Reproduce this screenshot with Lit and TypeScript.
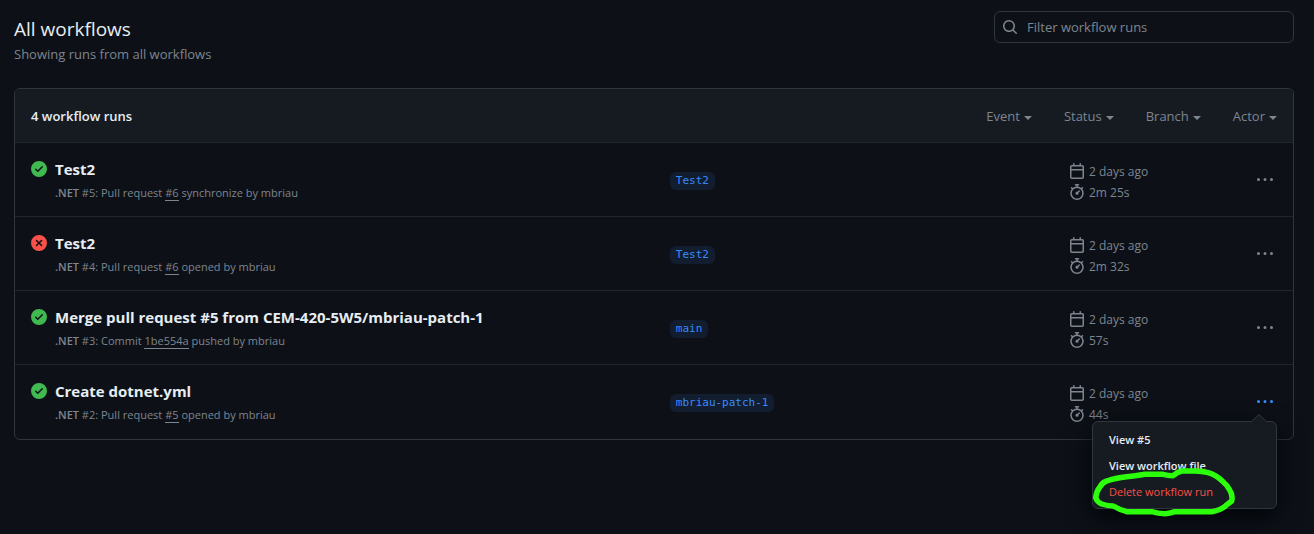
import { LitElement, html, svg, css } from "lit";
import { customElement, state } from "lit/decorators.js";

type Run = {
  ok: boolean;
  title: string;
  num: number;
  before: string;
  ref: string;
  after: string;
  branch: string;
  duration: string;
};

const RUNS: Run[] = [
  { ok: true, title: "Test2", num: 5, before: "Pull request", ref: "#6", after: "synchronize by", branch: "Test2", duration: "2m 25s" },
  { ok: false, title: "Test2", num: 4, before: "Pull request", ref: "#6", after: "opened by", branch: "Test2", duration: "2m 32s" },
  { ok: true, title: "Merge pull request #5 from CEM-420-5W5/mbriau-patch-1", num: 3, before: "Commit", ref: "1be554a", after: "pushed by", branch: "main", duration: "57s" },
  { ok: true, title: "Create dotnet.yml", num: 2, before: "Pull request", ref: "#5", after: "opened by", branch: "mbriau-patch-1", duration: "44s" },
];

const ICONS = {
  search: svg`<path fill-rule="evenodd" d="M11.5 7a4.499 4.499 0 11-8.998 0A4.499 4.499 0 0111.5 7zm-.82 4.74a6 6 0 111.06-1.06l3.04 3.04a.75.75 0 11-1.06 1.06l-3.04-3.04z"/>`,
  check: svg`<path fill-rule="evenodd" d="M8 16A8 8 0 108 0a8 8 0 000 16zm3.78-9.72a.75.75 0 00-1.06-1.06L6.75 9.19 5.28 7.72a.75.75 0 00-1.06 1.06l2 2a.75.75 0 001.06 0l4.5-4.5z"/>`,
  cross: svg`<path fill-rule="evenodd" d="M2.343 13.657A8 8 0 1113.657 2.343 8 8 0 012.343 13.657zM6.03 4.97a.75.75 0 00-1.06 1.06L6.94 8 4.97 9.97a.75.75 0 101.06 1.06L8 9.06l1.97 1.97a.75.75 0 101.06-1.06L9.06 8l1.97-1.97a.75.75 0 10-1.06-1.06L8 6.94 6.03 4.97z"/>`,
  calendar: svg`<path fill-rule="evenodd" d="M4.75 0a.75.75 0 01.75.75V2h5V.75a.75.75 0 011.5 0V2h1.25c.966 0 1.75.784 1.75 1.75v10.5A1.75 1.75 0 0113.25 16H2.75A1.75 1.75 0 011 14.25V3.75C1 2.784 1.784 2 2.75 2H4V.75A.75.75 0 014.75 0zm0 3.5h8.5a.25.25 0 01.25.25V6h-11V3.75a.25.25 0 01.25-.25h2zm-2.25 4v6.75c0 .138.112.25.25.25h10.5a.25.25 0 00.25-.25V7.5h-11z"/>`,
  stopwatch: svg`<path fill-rule="evenodd" d="M5.75.75A.75.75 0 016.5 0h3a.75.75 0 010 1.5h-.75v1l-.001.041a6.718 6.718 0 013.464 1.435l.007-.006.75-.75a.75.75 0 111.06 1.06l-.75.75-.006.007a6.75 6.75 0 11-10.548 0L2.72 5.03l-.75-.75a.75.75 0 011.06-1.06l.75.75.007.006A6.718 6.718 0 017.25 2.541a.756.756 0 010-.041v-1H6.5a.75.75 0 01-.75-.75zM8 14.5A5.25 5.25 0 108 4a5.25 5.25 0 000 10.5zm.389-6.7l1.33-1.33a.75.75 0 111.061 1.06L9.45 8.861A1.502 1.502 0 018 10.75a1.5 1.5 0 11.389-2.95z"/>`,
  kebab: svg`<path d="M8 9a1.5 1.5 0 100-3 1.5 1.5 0 000 3zM1.5 9a1.5 1.5 0 100-3 1.5 1.5 0 000 3zm13 0a1.5 1.5 0 100-3 1.5 1.5 0 000 3z"/>`,
};

const icon = (name: keyof typeof ICONS, cls = "") =>
  html`<svg class="icon ${cls}" viewBox="0 0 16 16" width="16" height="16" aria-hidden="true">${ICONS[name]}</svg>`;

@customElement("app-root")
export class AppRoot extends LitElement {
  @state() private openRun: number | null = 2;

  static styles = css`
    :host {
      display: block;
      box-sizing: border-box;
      min-height: 100vh;
      padding: 11px 20px 24px 14px;
      background: #0d1117;
      color: #e6edf3;
      font-family: "Segoe UI", "Open Sans", "Noto Sans", sans-serif;
      font-size: 13px;
      line-height: 20px;
    }
    * { box-sizing: border-box; }
    h1, h2, h3, p, ul { margin: 0; padding: 0; }
    ul { list-style: none; }
    button, input { font: inherit; color: inherit; background: none; border: 0; padding: 0; }
    button { cursor: pointer; }
    a { color: inherit; text-decoration: none; }
    .icon { display: block; flex: none; fill: currentColor; }
    .top { display: flex; justify-content: space-between; align-items: flex-start; margin-bottom: 27px; }
    h1 { font-size: 19px; font-weight: 400; line-height: 36px; }
    .sub { color: #7d8590; line-height: 14px; }
    .search {
      display: flex; align-items: center; gap: 9px;
      width: 300px; height: 32px; padding: 0 7px;
      border: 1px solid #30363d; border-radius: 6px; color: #7d8590;
    }
    .search input { flex: 1; min-width: 0; outline: none; }
    .search input::placeholder { color: #7d8590; opacity: 1; }
    .panel { border: 1px solid #30363d; border-radius: 6px; }
    .head {
      display: flex; align-items: center; justify-content: space-between;
      padding: 17px 16px 16px; background: #161b22; border-radius: 5px 5px 0 0;
    }
    .head h2 { font-size: 13px; font-weight: 600; line-height: 20px; }
    .filters { display: flex; gap: 32px; color: #7d8590; }
    .filters button { display: flex; align-items: center; gap: 4px; }
    .filters button::after {
      content: ""; border: 4px solid transparent; border-top-color: currentColor; border-bottom: 0; margin-top: 3px;
    }
    .runs { padding-bottom: 1px; }
    .run {
      display: grid; grid-template-columns: 8fr 5fr 208px; align-items: center;
      padding: 15px 16px 13px; border-top: 1px solid #21262d;
    }
    .main { display: flex; gap: 8px; align-self: start; }
    .status { padding-top: 3px; color: #3fb950; }
    .status.failed { color: #f85149; }
    h3 { font-size: 15px; font-weight: 700; line-height: 22px; }
    .meta { margin-top: 2px; font-size: 11px; line-height: 21px; color: #7d8590; }
    .meta b { font-weight: 600; }
    .meta .ref { border-bottom: 1px solid #7d8590; }
    .where { display: flex; }
    .branch {
      padding: 0 6px; border-radius: 6px; line-height: 18px;
      font-family: Consolas, "DejaVu Sans Mono", monospace; font-size: 11px;
      color: #388bfd; background: #121d2f;
    }
    .end { display: flex; justify-content: space-between; align-items: center; position: relative; }
    .times { padding-top: 3px; color: #7d8590; font-size: 12px; line-height: 21px; }
    .times li { display: flex; align-items: flex-start; gap: 4px; }
    .times .icon { margin-top: 2px; }
    .more { padding: 3px 4px 5px; color: #7d8590; }
    .more.open { color: #388bfd; }
    .menu {
      position: absolute; top: 41px; right: 0; z-index: 2;
      width: 185px; padding: 5px 0 3px;
      background: #161b22; border: 1px solid #30363d; border-radius: 6px;
      box-shadow: 0 8px 24px #010409; font-size: 11px; line-height: 26px;
    }
    .caret { position: absolute; top: -8px; right: 9px; display: block; }
    .menu li > * { display: block; width: 100%; padding: 0 16px; text-align: left; line-height: 26px; font-weight: 600; }
    .menu .danger { color: #f85149; font-weight: 400; }
    .mark { position: absolute; left: 0; top: 46px; pointer-events: none; overflow: visible; }
  `;

  private toggle(n: number) {
    this.openRun = this.openRun === n ? null : n;
  }

  private menu() {
    return html`<div class="menu">
      <svg class="caret" width="16" height="8" viewBox="0 0 16 8" aria-hidden="true">
        <path d="M0 8L8 0L16 8V9H0Z" fill="#161b22" /><path d="M0 8L8 .5L16 8" fill="none" stroke="#30363d" />
      </svg>
      <ul>
        <li><a href="#pull">View #5</a></li>
        <li><a href="#file">View workflow file</a></li>
        <li><button class="danger" type="button">Delete workflow run</button></li>
      </ul>
      <svg class="mark" width="144" height="48" viewBox="0 0 144 48" aria-hidden="true">
        <path d="M80 7.7Q75 7.5 70 6.3L52 6.3Q42 8 33.7 8.7Q22 10 13.7 13Q10 14 7 18.7Q3.5 23 2.7 29.7Q4 34 8.7 36Q15 38 20.3 38Q27 42 33.7 43.7H58.7Q65 45.7 72 45.7Q77 45.5 82 43.7H118.7Q128 42 132.7 37.7L138.7 33Q140 27 136.7 22Q134 17 129.3 13Q123 7 115.3 4.7Q109 3 102 3H88.7Q84 4 80 7.7Z"
          fill="none" stroke="#2bff0a" stroke-width="5.5" stroke-linejoin="round" />
      </svg>
    </div>`;
  }

  private row(r: Run) {
    const open = this.openRun === r.num;
    return html`<li class="run">
      <div class="main">
        <span class="status ${r.ok ? "" : "failed"}">${icon(r.ok ? "check" : "cross")}</span>
        <div>
          <h3><a href="#run">${r.title}</a></h3>
          <p class="meta"><b>.NET</b> #${r.num}: ${r.before} <a class="ref" href="#ref">${r.ref}</a> ${r.after} mbriau</p>
        </div>
      </div>
      <div class="where"><a class="branch" href="#branch">${r.branch}</a></div>
      <div class="end">
        <ul class="times">
          <li>${icon("calendar")}2 days ago</li>
          <li>${icon("stopwatch")}${r.duration}</li>
        </ul>
        <button class="more ${open ? "open" : ""}" type="button" aria-label="Run options" @click=${() => this.toggle(r.num)}>${icon("kebab")}</button>
        ${open ? this.menu() : ""}
      </div>
    </li>`;
  }

  render() {
    return html`
      <header class="top">
        <div>
          <h1>All workflows</h1>
          <p class="sub">Showing runs from all workflows</p>
        </div>
        <label class="search">${icon("search")}<input type="text" aria-label="Filter workflow runs" placeholder="Filter workflow runs" /></label>
      </header>
      <section class="panel">
        <div class="head">
          <h2>4 workflow runs</h2>
          <div class="filters">
            ${["Event", "Status", "Branch", "Actor"].map((f) => html`<button type="button">${f}</button>`)}
          </div>
        </div>
        <ul class="runs">${RUNS.map((r) => this.row(r))}</ul>
      </section>
    `;
  }
}
